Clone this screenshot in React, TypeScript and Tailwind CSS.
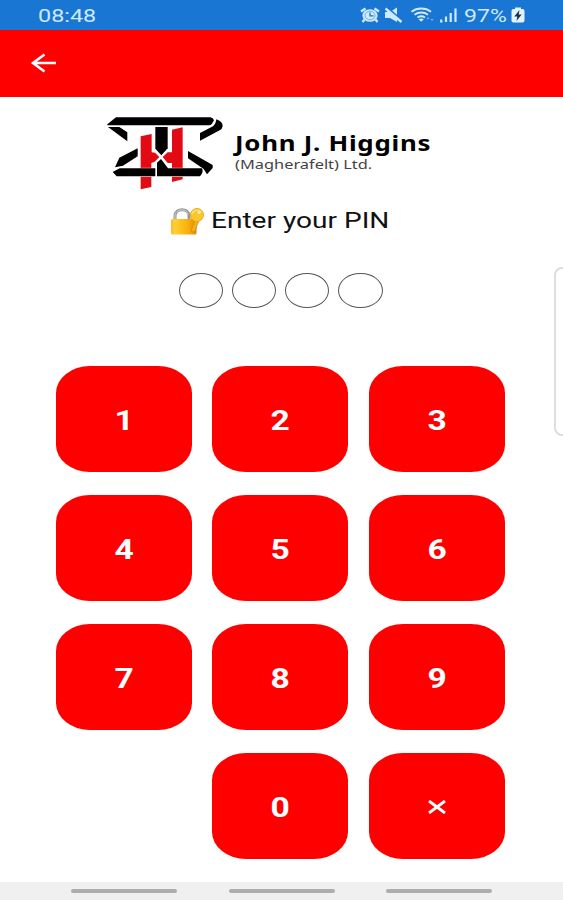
import { useState } from "react";

const KEYS = ["1", "2", "3", "4", "5", "6", "7", "8", "9", "", "0", "×"];

const StatusBar = () => {
  return (
    <div className="flex h-[30px] shrink-0 bg-[#1976d2] text-[#cdeaff]">
      <div className="w-[359px] pl-[38px]">
        <span className="inline-block origin-left scale-x-[1.3] text-[18px] leading-[32px]">08:48</span>
      </div>
      <svg className="h-[30px] w-[104px]" viewBox="0 0 104 30" fill="none" stroke="currentColor">
        {/* alarm */}
        <ellipse cx="11" cy="15.5" rx="7.6" ry="6.3" fill="currentColor" stroke="none" />
        <path d="M2 11.5 6.5 8.500M15.500 8.500l4.500 3M5.500 19.500l-2 2.500M16.500 19.500l2 2.500" strokeWidth="2.400" />
        <path d="M11 12.500v3.300h3.500" stroke="#1976d2" strokeWidth="1.300" />
        <ellipse cx="11" cy="15.500" rx="5" ry="4.300" stroke="#1976d2" strokeWidth=".5" />
        {/* muted speaker */}
        <path d="M26 12h5l7-4.500v14.500L31 18h-5z" fill="currentColor" stroke="none" />
        <path d="m27.500 7 16 14" stroke="#1976d2" strokeWidth="2" />
        <path d="m26.500 8.500 16 13.500" strokeWidth="2.300" />
        {/* wifi */}
        <path d="M52.500 11.700c5.500-4.200 14-4.200 19.500 0M55.500 14.700c4-2.900 9.500-2.900 13.500 0M58.500 17.500c2.500-1.700 5-1.700 7.500 0" strokeWidth="1.900" />
        <path d="m59.500 19.300 2.700 2.500 2.700-2.500c-1.700-1-3.700-1-5.400 0z" fill="currentColor" stroke="none" />
        <path d="m67.500 19 1.500-2 1.500 2zM71.500 19h3l-1.500 2z" fill="#78baf3" stroke="none" />
        {/* signal */}
        <path d="M82.200 22v-2.500M87 22v-5.500M91.700 22v-9M96.500 22V8.500" strokeWidth="2.200" />
        <path d="M81 22h2.500" />
      </svg>
      <div className="w-[48px] pl-[1px]">
        <span className="inline-block origin-left scale-x-[1.28] text-[18px] leading-[32px]">97%</span>
      </div>
      <svg className="h-[30px] w-[14px]" viewBox="0 0 14 30">
        <path d="M4 7.500h6V10H4z" fill="#e2f3ff" />
        <rect x=".5" y="9" width="13" height="13.500" rx="2" fill="#e2f3ff" />
        <path d="M8.500 10 3.300 16.500h3L5.500 21l5.200-6.500h-3z" fill="#17324d" />
      </svg>
    </div>
  );
};

const CompanyLogo = () => {
  return (
    <svg className="h-[95px] w-[140px] shrink-0" viewBox="0 0 420 285">
      <g fill="#e30b13">
        <path d="M137 94 170 87V142L180 143 193 156 179 170 169 174V246L137 253Z" />
        <path d="M231 74 263 67V223L231 231V174H218L203 156 218 142H231Z" />
      </g>
      <g fill="#000">
        <path d="M37 58 63 37H346Q355 38 357 46L350 58Q347 61 341 61H37Z" />
        <path d="M364 43Q383 49 383 63Q382 72 374 76L315 107V84L354 64Q362 58 364 43Z" />
        <path d="M39 66H73L97 82V109Z" />
        <path d="M128 130V154L84 182 60 187 73 158Z" />
        <path d="M279 138 353 180V189L336 208 326 192 279 160Z" />
        <path d="M181 66H218V130L199 151 181 131Z" />
        <path d="M53 201 74 190H181V214H65Z" stroke="#fff" strokeWidth="3" paintOrder="stroke" />
        <path d="M198 162 219 190H321Q327 202 315 214H186V173Z" stroke="#fff" strokeWidth="3" paintOrder="stroke" />
      </g>
    </svg>
  );
};

const LockIcon = () => {
  return (
    <svg className="h-[30px] w-[36px] shrink-0" viewBox="0 0 36 30">
      <defs>
        <linearGradient id="gold">
          <stop offset="0" stopColor="#f8b934" />
          <stop offset=".15" stopColor="#ffd12f" />
          <stop offset=".7" stopColor="#f9ad08" />
          <stop offset="1" stopColor="#d98908" />
        </linearGradient>
      </defs>
      <path d="M6 15V10C6 1.500 20 1.500 20 10v5" fill="none" stroke="#94989b" strokeWidth="3" />
      <path d="M6 13V10C6 2 19 2 19 9" fill="none" stroke="#cfd2d2" />
      <rect x="2" y="13" width="25.500" height="15.500" rx="1.500" fill="url(#gold)" />
      <path d="m26 14-4 11 3 1 2-3 1-4 3-6z" fill="#efb01b" stroke="#d88d16" strokeWidth=".8" />
      <ellipse cx="28" cy="9" rx="6.500" ry="6.500" fill="#fac52d" stroke="#edae1c" />
      <path d="M23 8c1-4 7-5 9-2" fill="none" stroke="#ffe66b" strokeWidth="1.500" />
      <circle cx="30" cy="6.500" r="1.500" fill="#fff5bd" />
    </svg>
  );
};

const App = () => {
  const [pin, setPin] = useState("");

  const press = (key: string) => {
    if (key === "×") setPin(pin.slice(0, -1));
    else if (pin.length < 4) setPin(pin + key);
  };

  return (
    <div className="relative flex h-[900px] w-[563px] flex-col overflow-hidden bg-white font-['Roboto',sans-serif]">
      <StatusBar />
      <header className="flex h-[67px] shrink-0 items-center bg-[#ff0000] pl-[30px]">
        <svg className="-mt-px h-[22px] w-[28px]" viewBox="0 0 28 22" fill="none" stroke="#fff" strokeWidth="2.600">
          <path d="M26 11H3M14.500 2.500 3 11l11.500 8.500" />
        </svg>
      </header>

      <main className="flex grow flex-col pt-2">
        <div className="flex h-[95px] pl-[95px]">
          <CompanyLogo />
          <div className="flex flex-col pt-[28px] font-['Noto_Sans',sans-serif]">
            <span className="w-max origin-left scale-x-[1.23] text-[21px] leading-[20px] font-bold tracking-[0.6px] text-black">
              John J. Higgins
            </span>
            <span className="mt-[3px] w-max origin-left scale-x-[1.26] text-[13px] leading-[17px] text-[#444]">
              (Magherafelt) Ltd.
            </span>
          </div>
        </div>

        <div className="mt-[6px] flex h-[30px] items-center pl-[169px]">
          <LockIcon />
          <span className="ml-[6px] w-max origin-left scale-x-[1.275] text-[22px] leading-[30px] whitespace-nowrap text-[#111]">
            Enter your PIN
          </span>
        </div>

        <div className="mt-[37px] flex gap-[9px] pl-[178.500px]">
          {[0, 1, 2, 3].map((i) => (
            <div
              key={i}
              className={`h-[35px] w-[44.300px] rounded-[50%] border border-[#555] ${pin.length > i ? "bg-[#555]" : ""}`}
            />
          ))}
        </div>

        <div className="mt-[58px] grid grid-cols-[repeat(3,136px)] gap-x-[20.300px] gap-y-[23px] pl-[56px]">
          {KEYS.map((key) =>
            key === "" ? (
              <div key="blank" />
            ) : (
              <button
                key={key}
                onClick={() => press(key)}
                className="flex h-[106px] items-center justify-center rounded-[34px/27px] bg-[#ff0000] text-[28px] font-bold text-white"
              >
                {key === "×" ? (
                  <svg className="mt-[1px] h-[14px] w-[18px]" viewBox="0 0 18 14" stroke="#fff" strokeWidth="2.900">
                    <path d="m1 1 16 12M17 1 1 13" />
                  </svg>
                ) : (
                  <span className="mt-[3px] scale-x-[1.2]">{key}</span>
                )}
              </button>
            ),
          )}
        </div>
      </main>

      <nav className="flex h-[18px] shrink-0 items-center gap-[51.500px] bg-[#f0f0f0] pl-[71px]">
        <div className="h-1 w-[106px] rounded-full bg-[#adadad]" />
        <div className="h-1 w-[106px] rounded-full bg-[#adadad]" />
        <div className="h-1 w-[106px] rounded-full bg-[#adadad]" />
      </nav>

      {/* edge panel handle */}
      <div className="absolute top-[267px] -right-[6px] h-[169px] w-[15px] rounded-l-[8px] border-2 border-[#dedede] bg-white" />
    </div>
  );
};

export default App;
